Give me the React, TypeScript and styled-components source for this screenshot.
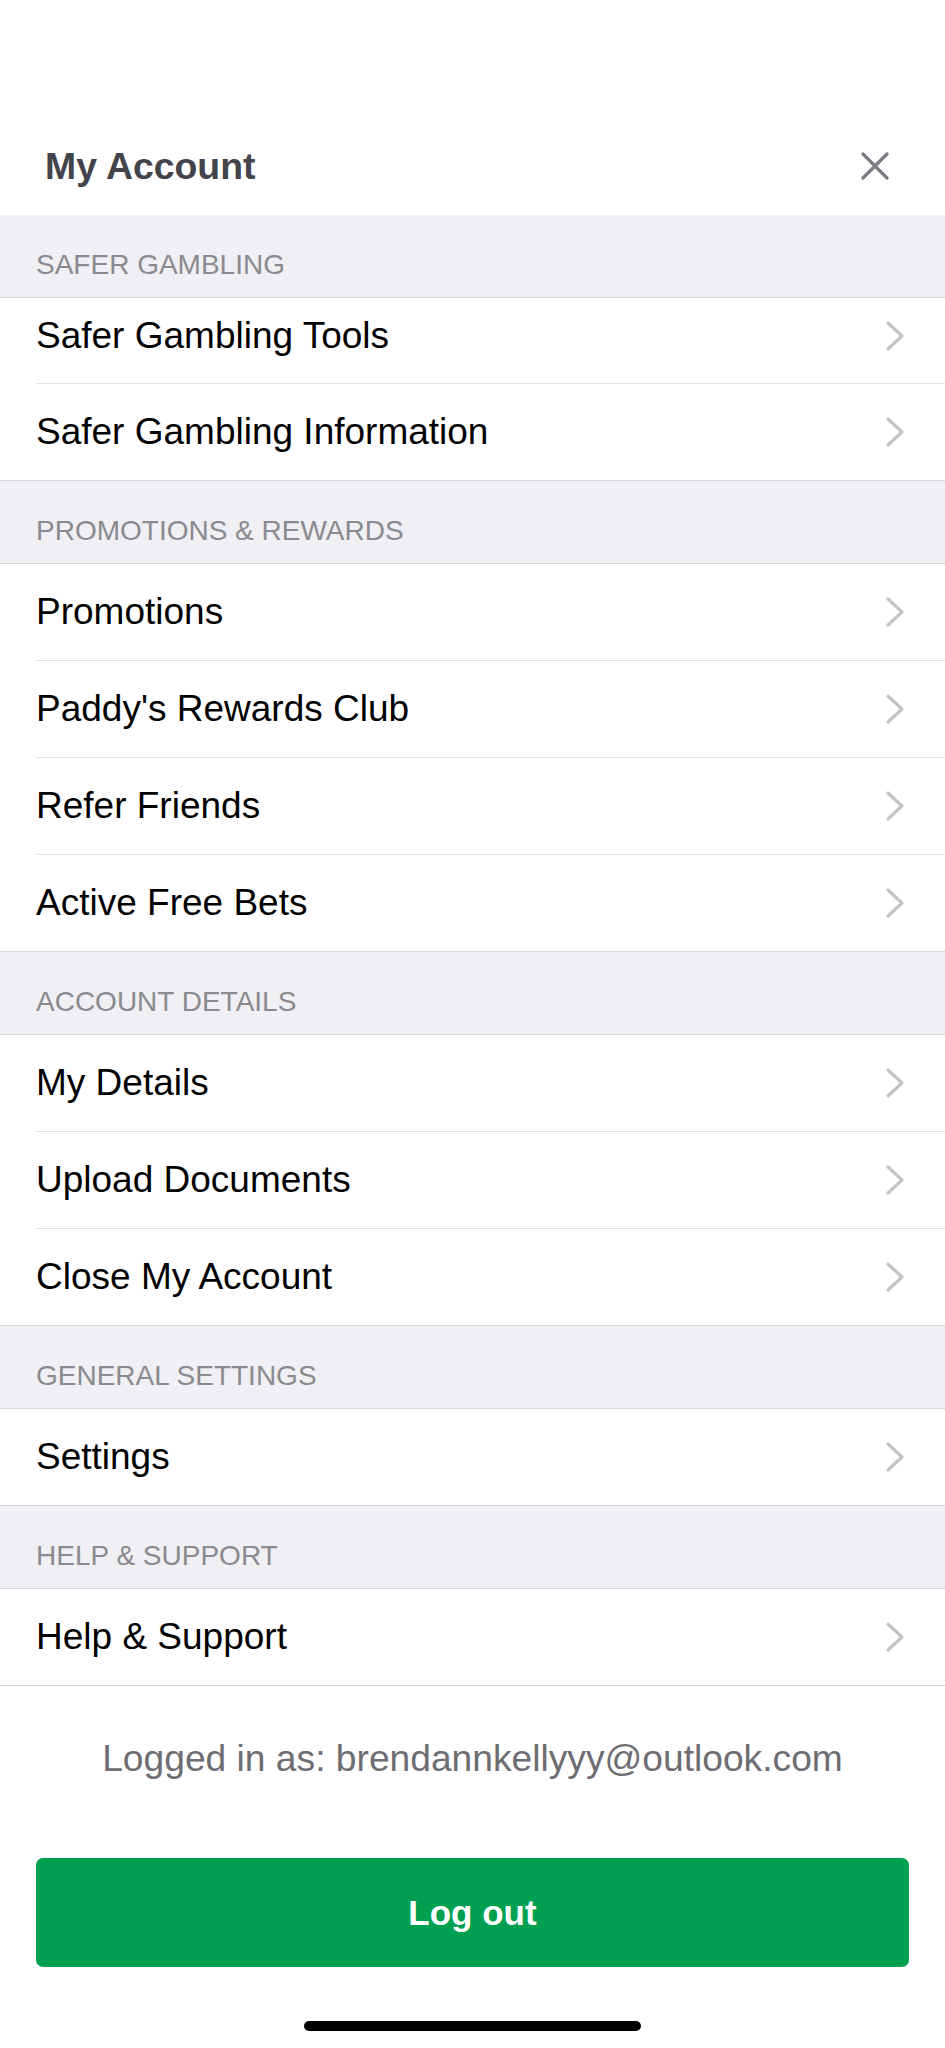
import React from "react";
import styled, { createGlobalStyle } from "styled-components";

const GlobalStyle = createGlobalStyle`
  html, body { margin: 0; padding: 0; background: #ffffff; }
  body { font-family: "Liberation Sans", Arial, sans-serif; -webkit-font-smoothing: antialiased; }
  * { box-sizing: border-box; }
`;

const Page = styled.div`
  width: 945px;
  min-height: 2048px;
  display: flex;
  flex-direction: column;
  background: #ffffff;
`;

const Header = styled.header`
  height: 215px;
  padding: 140px 48px 23px 45px;
  display: flex;
  align-items: center;
  justify-content: space-between;
`;

const Title = styled.h1`
  margin: 0;
  font-size: 37.4px;
  line-height: 52px;
  font-weight: 700;
  color: #43434b;
`;

const CloseButton = styled.button`
  width: 44px;
  height: 44px;
  padding: 0;
  border: none;
  background: transparent;
  display: flex;
  align-items: center;
  justify-content: center;
`;

const SectionHeader = styled.div`
  height: 83px;
  background: #efeff4;
  border-bottom: 1px solid #d6d6da;
  padding: 0 36px 18px;
  display: flex;
  align-items: flex-end;
  font-size: 28px;
  line-height: 28px;
  color: #8a8a8f;
  text-transform: uppercase;
`;

const Group = styled.ul`
  margin: 0;
  padding: 0;
  list-style: none;
  border-bottom: 1px solid #d6d6da;
`;

const Row = styled.li<{ $height: number; $hidden: number }>`
  height: ${(p) => p.$height}px;
  margin-left: 36px;
  padding: 0 40px ${(p) => p.$hidden}px 0;
  display: flex;
  align-items: center;
  justify-content: space-between;
  border-bottom: 1px solid #e1e1e4;
  font-size: 37px;
  color: #000000;
  &:last-child {
    height: ${(p) => p.$height - 1}px;
    border-bottom: none;
  }
`;

const Footer = styled.div`
  display: flex;
  flex-direction: column;
  align-items: center;
  padding: 50px 36px 0;
`;

const LoggedIn = styled.p`
  margin: 0;
  font-size: 37.2px;
  line-height: 44px;
  color: #6d6d72;
`;

const LogoutButton = styled.button`
  margin-top: 78px;
  width: 100%;
  height: 109px;
  border: none;
  border-radius: 7px;
  background: #00a050;
  color: #ffffff;
  font-family: "Liberation Sans", Arial, sans-serif;
  font-size: 35px;
  font-weight: 700;
`;

const HomeIndicator = styled.div`
  margin-top: 54px;
  width: 337px;
  height: 10px;
  border-radius: 5px;
  background: #000000;
`;

const Chevron = () => (
  <svg width="20" height="32" viewBox="0 0 20 32" fill="none">
    <path d="M3 3 L17 16 L3 29" stroke="#c4c4c8" strokeWidth="3.2" strokeLinecap="round" strokeLinejoin="round" />
  </svg>
);

const CloseIcon = () => (
  <svg width="28" height="28" viewBox="0 0 28 28" fill="none">
    <path d="M2 2 L26 26 M26 2 L2 26" stroke="#7b7b83" strokeWidth="3.2" strokeLinecap="round" />
  </svg>
);

const sections: { title: string; items: string[] }[] = [
  { title: "Safer Gambling", items: ["Safer Gambling Tools", "Safer Gambling Information"] },
  {
    title: "Promotions & Rewards",
    items: ["Promotions", "Paddy's Rewards Club", "Refer Friends", "Active Free Bets"],
  },
  { title: "Account Details", items: ["My Details", "Upload Documents", "Close My Account"] },
  { title: "General Settings", items: ["Settings"] },
  { title: "Help & Support", items: ["Help & Support"] },
];

export default function App() {
  return (
    <>
      <GlobalStyle />
      <Page>
        <Header>
          <Title>My Account</Title>
          <CloseButton aria-label="Close">
            <CloseIcon />
          </CloseButton>
        </Header>
        {sections.map((s, si) => (
          <React.Fragment key={s.title}>
            <SectionHeader>{s.title}</SectionHeader>
            <Group>
              {s.items.map((item, ii) => {
                const first = si === 0 && ii === 0;
                return (
                  <Row key={item} $height={first ? 86 : 97} $hidden={first ? 9 : 0}>
                    <span>{item}</span>
                    <Chevron />
                  </Row>
                );
              })}
            </Group>
          </React.Fragment>
        ))}
        <Footer>
          <LoggedIn>Logged in as: brendannkellyyy@outlook.com</LoggedIn>
          <LogoutButton>Log out</LogoutButton>
          <HomeIndicator />
        </Footer>
      </Page>
    </>
  );
}
